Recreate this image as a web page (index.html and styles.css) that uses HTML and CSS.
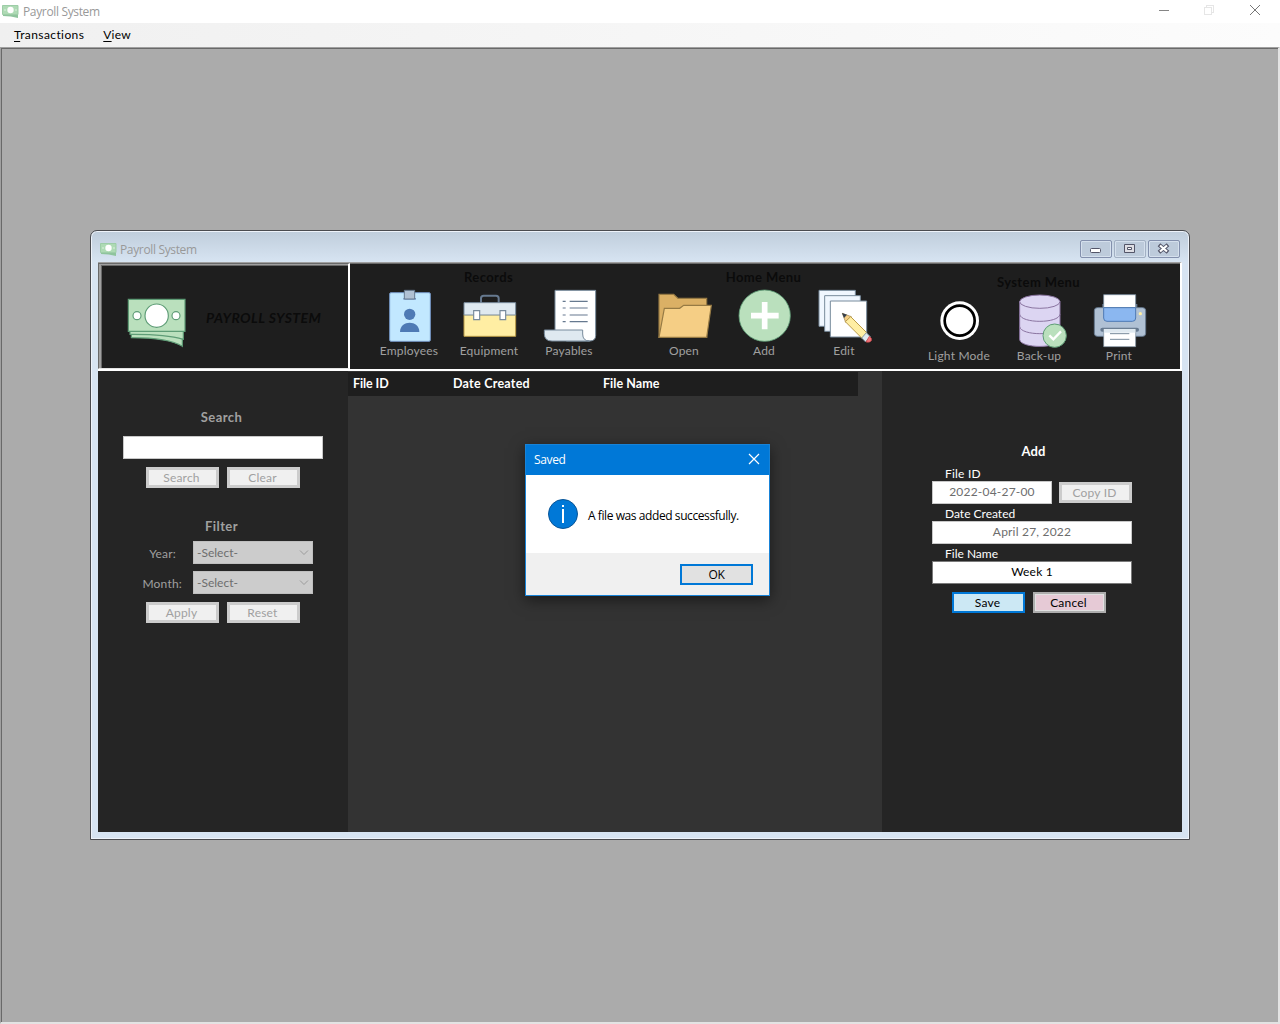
FILE: index.html
```html
<!DOCTYPE html>
<html lang="en">
<head>
<meta charset="utf-8">
<title>Payroll System</title>
<link rel="stylesheet" href="styles.css">
</head>
<body>
<svg class="defs" width="0" height="0" aria-hidden="true">
  <symbol id="money" viewBox="125 219 177 150">
    <g fill="#bae0bd" stroke="#5e9c76" stroke-width="3.5">
      <path d="M138 325V338Q250 338 291 364V325Z"/>
      <path d="M134 315V328Q240 327 294 343V315Z"/>
      <path d="M129 223H299V319H129Z"/>
      <circle cx="214" cy="272" r="35" fill="#fff"/>
      <circle cx="155" cy="272" r="12" fill="#fff"/>
      <circle cx="272" cy="272" r="12" fill="#fff"/>
    </g>
  </symbol>
  <symbol id="money-small" viewBox="0 0 17 14">
    <path d="M1 9H16V13Q9 11 1 11Z" fill="#8fc49c"/>
    <path d="M.5 .5H16V9.500H.5Z" fill="#aedab4" stroke="#9dcda7"/>
    <circle cx="8.500" cy="5" r="3.200" fill="#fff"/>
    <circle cx="3" cy="5" r="1" fill="#cde9d0"/><circle cx="14" cy="5" r="1" fill="#cde9d0"/>
  </symbol>
</svg>
<div class="app">
  <header class="titlebar">
    <svg class="mini" width="17" height="14"><use href="#money-small"/></svg>
    <span class="seg title-text">Payroll System</span>
    <svg class="app-controls" width="104" height="20" viewBox="0 0 104 20" fill="none" shape-rendering="crispEdges">
      <path d="M1 10.5H11" stroke="#858585"/>
      <path d="M46.5 7.5H53.5V14.5H46.5ZM48.500 7V5.500H55.500V12.500H54" stroke="#e6e6e6"/>
      <path d="M92 5L102 15M102 5L92 15" stroke="#777" shape-rendering="auto"/>
    </svg>
  </header>
  <nav class="menubar"><span class="m1"><u>T</u>ransactions</span><span class="m2"><u>V</u>iew</span></nav>
  <main class="workspace">
    <section class="window">
      <div class="caption">
        <svg class="mini" width="17" height="14"><use href="#money-small"/></svg>
        <span class="seg title-text">Payroll System</span>
        <div class="controls">
          <span class="control"><svg width="32" height="18"><rect x="10.500" y="8.500" width="10" height="4" rx="1" fill="#fff" stroke="#535568"/></svg></span>
          <span class="control soft"><svg width="32" height="18"><path d="M10.500 4.500H20.500V12.500H10.500Z" fill="#dedee4" stroke="#535568"/><path d="M13.500 7.500H17.500V9.500H13.500Z" fill="#fff" stroke="#535568"/></svg></span>
          <span class="control"><svg width="32" height="18"><path d="M12.500 6L18.500 11M18.500 6L12.500 11" stroke="#535568" stroke-width="4" stroke-linecap="square"/><path d="M12 5.500L19 11.500M19 5.500L12 11.500" stroke="#fff" stroke-width="2.200"/></svg></span>
        </div>
      </div>
      <div class="client">
        <div class="ribbon">
          <div class="brand">
            <svg width="59" height="50"><use href="#money"/></svg>
            <strong>PAYROLL SYSTEM</strong>
          </div>
          <div class="groups">
            <div class="group">
              <h2 class="t-records">Records</h2>
              <div class="tools">
                <div class="tool">
                  <svg viewBox="96 87 162 162"><rect x="119" y="98" width="122" height="146" rx="4" fill="#c2e8ff" stroke="#7496c4" stroke-width="3"/><path d="M160 119V114H198V119Z" fill="#7496c4"/><path d="M163 91H194V117H163Z" fill="#b0c1d4" stroke="#66798f" stroke-width="3"/><g fill="#4e7ab5"><circle cx="179" cy="163" r="17"/><path d="M150 216C150 179 208 179 208 216Z"/></g></svg>
                  <span class="l-emp">Employees</span>
                </div>
                <div class="tool">
                  <svg viewBox="336 87 162 162"><path d="M393 129V115Q393 107 401 107H438Q446 107 446 115V129" fill="none" stroke="#66798f" stroke-width="6"/><path d="M342 164H497V229H342Z" fill="#ffeea3" stroke="#ba9b48" stroke-width="3"/><path d="M342 128H497V165H342Z" fill="#dfe9f0" stroke="#788b9c" stroke-width="3"/><path d="M371 152H389V179H371ZM450 152H467V179H450Z" fill="#fff" stroke="#788b9c" stroke-width="3.500"/></svg>
                  <span class="l-eq">Equipment</span>
                </div>
                <div class="tool">
                  <svg viewBox="576 87 162 162"><path d="M615 91H737V226Q737 243 719 243H650L615 210Z" fill="#fff" stroke="#788b9c" stroke-width="3"/><path d="M583 210H698V222Q698 243 719 243H606Q583 243 583 221Z" fill="#dfe9f0" stroke="#788b9c" stroke-width="3"/><path d="M638 124H647M659 124H713M638 144H647M659 144H713M638 165H647M659 165H713M638 185H647M659 185H713" stroke="#66798f" stroke-width="3.500"/></svg>
                  <span class="l-pay">Payables</span>
                </div>
              </div>
            </div>
            <div class="group">
              <h2 class="t-home">Home Menu</h2>
              <div class="tools">
                <div class="tool">
                  <svg viewBox="51 87 162 162"><g stroke="#967a44" stroke-width="3.500"><path d="M57 232V103H101L114 115H200V232Z" fill="#dbb065"/><path d="M57 232L73 145H119L131 136H214L200 232Z" fill="#f5ce85"/></g></svg>
                  <span class="l-open">Open</span>
                </div>
                <div class="tool">
                  <svg viewBox="291 87 162 162"><circle cx="374" cy="167" r="77" fill="#bae0bd" stroke="#5e9c76" stroke-width="2.500"/><path d="M374 126V208M333 167H416" stroke="#fff" stroke-width="17"/></svg>
                  <span class="l-add">Add</span>
                </div>
                <div class="tool">
                  <svg viewBox="531 87 162 162"><g stroke="#788b9c" stroke-width="3"><path d="M537 91H646V199H537Z" fill="#f0f7ff"/><path d="M554 107H661V214H554Z" fill="#f0f7ff"/><path d="M571 123H680V231H571Z" fill="#fff"/></g><path d="M607 160L634 170L617 187Z" fill="#f5ce85" stroke="#967a44" stroke-width="2"/><path d="M606 159L621 164L612 174Z" fill="#36404d"/><path d="M632 170L681 219L666 235L616 185Z" fill="#ffeea3" stroke="#ba9b48" stroke-width="3"/><path d="M679 218L691 230L677 246L665 234Z" fill="#dfe9f0" stroke="#788b9c" stroke-width="2.500"/><path d="M688 229Q697 235 694 242Q689 249 678 246Z" fill="#f2747b" stroke="#c74343" stroke-width="2"/></svg>
                  <span class="l-edit">Edit</span>
                </div>
              </div>
            </div>
            <div class="group lower">
              <h2 class="t-system">System Menu</h2>
              <div class="tools">
                <div class="tool">
                  <svg viewBox="96 207 162 162"><circle cx="179" cy="287" r="58" fill="#fff"/><circle cx="179" cy="287" r="45" fill="#fff" stroke="#000" stroke-width="8"/></svg>
                  <span class="l-light">Light Mode</span>
                </div>
                <div class="tool">
                  <svg viewBox="336 207 162 162"><path d="M359 230V344C363 371 476 371 480 344V230Z" fill="#dcd5f2" stroke="#8b75a1" stroke-width="3"/><ellipse cx="419.500" cy="230" rx="60.500" ry="20" fill="#dcd5f2" stroke="#8b75a1" stroke-width="3"/><path d="M359 268C363 296 476 296 480 268M359 305C363 333 476 333 480 305" fill="none" stroke="#8b75a1" stroke-width="3"/><circle cx="464" cy="332" r="35" fill="#bae0bd" stroke="#5e9c76" stroke-width="3"/><path d="M448 331L460 343L483 319" fill="none" stroke="#fff" stroke-width="7"/></svg>
                  <span class="l-back">Back-up</span>
                </div>
                <div class="tool">
                  <svg viewBox="576 207 162 162"><path d="M607 237H712V260H607Z" fill="#66798f"/><rect x="583" y="248" width="154" height="86" rx="9" fill="#b0c1d4" stroke="#66798f" stroke-width="3"/><path d="M611 209H707V248H611Z" fill="#fff" stroke="#788b9c" stroke-width="2.500"/><path d="M611 248H707V279Q707 289 697 289H621Q611 289 611 279Z" fill="#8bb7f0" stroke="#4e7ab5" stroke-width="3"/><circle cx="721" cy="266" r="5" fill="#ffeea3"/><rect x="601" y="308" width="116" height="12" rx="6" fill="#66798f"/><path d="M611 312H707V365H611Z" fill="#fff" stroke="#788b9c" stroke-width="2"/><path d="M612 312H706V323H612Z" fill="#dfe9f0"/><path d="M630 326H688M630 343H688" stroke="#788b9c" stroke-width="3"/></svg>
                  <span class="l-print">Print</span>
                </div>
              </div>
            </div>
          </div>
        </div>
        <div class="panes">
          <aside class="left">
            <h3 class="h-search">Search</h3>
            <div class="field query"></div>
            <div class="pair"><button class="btn off b-search">Search</button><button class="btn off b-clear">Clear</button></div>
            <h3 class="h-filter">Filter</h3>
            <div class="row"><label class="l-year">Year:</label><div class="select"><span>-Select-</span><svg width="10" height="6"><path d="M1 .5L5 4.500L9 .5" fill="none" stroke="#9b9b9b"/></svg></div></div>
            <div class="row"><label class="l-month">Month:</label><div class="select"><span>-Select-</span><svg width="10" height="6"><path d="M1 .5L5 4.500L9 .5" fill="none" stroke="#9b9b9b"/></svg></div></div>
            <div class="pair last"><button class="btn off b-apply">Apply</button><button class="btn off b-reset">Reset</button></div>
          </aside>
          <div class="list"><div class="columns"><span class="c-id">File ID</span><span class="c-date">Date Created</span><span class="c-name">File Name</span></div></div>
          <aside class="right">
            <h3 class="h-add">Add</h3>
            <label class="f-id">File ID</label>
            <div class="idrow"><div class="field dim v-id">2022-04-27-00</div><button class="btn off b-copy">Copy ID</button></div>
            <label class="f-date">Date Created</label>
            <div class="field dim v-date">April 27, 2022</div>
            <label class="f-name">File Name</label>
            <div class="field active v-name">Week 1</div>
            <div class="pair"><button class="btn save">Save</button><button class="btn cancel">Cancel</button></div>
          </aside>
        </div>
      </div>
    </section>
  </main>
  <div class="dialog" role="dialog">
    <div class="dialog-title"><span class="seg d-title">Saved</span><svg width="12" height="12"><path d="M1 1L11 11M11 1L1 11" stroke="#fff" stroke-width="1.200"/></svg></div>
    <div class="dialog-body"><svg width="30" height="30"><circle cx="15" cy="15" r="14.500" fill="#0078d7" stroke="#0a5597"/><path d="M14 6h2v2h-2zM14 10h2v14h-2z" fill="#fff"/></svg><span class="seg d-msg">A file was added successfully.</span></div>
    <div class="dialog-foot"><button class="ok seg">OK</button></div>
  </div>
</div>
</body>
</html>
```
FILE: styles.css
```css
* { box-sizing: border-box; }
body { margin: 0; font: 12px/16px Lato, "Open Sans", sans-serif; color: #000; letter-spacing: .2px; }
button { font: inherit; letter-spacing: inherit; color: inherit; padding: 0; }
h2, h3 { margin: 0; font-size: 13px; line-height: 16px; font-weight: 700; text-align: center; letter-spacing: .4px; }
span, label, strong { white-space: nowrap; }
.defs { position: absolute; }
.seg { font-family: "Open Sans", sans-serif; letter-spacing: -.35px; }
.app { position: relative; width: 1280px; height: 1024px; overflow: hidden; background: #fff; display: flex; flex-direction: column; }
.titlebar { height: 23px; flex: none; display: flex; align-items: center; padding: 0 18px 0 2px; }
.title-text { color: #999; margin-left: 4px; }
.app-controls { margin: -3px 0 0 auto; }
.menubar { height: 24px; flex: none; padding: 0 14px; display: flex; align-items: center; gap: 19px; background: linear-gradient(90deg, #f0f0f0, #fcfcfc); letter-spacing: .4px; }
.menubar .m2 { letter-spacing: .2px; }
.menubar u { text-underline-offset: 2px; }
.workspace { flex: 1; position: relative; background: #ababab; border: 1px solid #e3e3e3; border-width: 1px 2px 2px 1px; border-top-color: #a0a0a0; border-left-color: #a0a0a0; box-shadow: inset 1px 1px #696969; }
.window { position: absolute; left: 89px; top: 182px; width: 1100px; height: 610px; border: 1px solid #4a4b4f; border-radius: 7px 7px 0 0; background: linear-gradient(#bfcddb, #d7e4f2 31px); box-shadow: inset 0 0 0 1px #eef3fa; padding: 0 7px 7px; display: flex; flex-direction: column; }
.caption { height: 31px; flex: none; display: flex; align-items: center; padding: 6px 2px 0; }
.caption .title-text { margin-left: 3px; }
.controls { margin: -2px 0 0 auto; display: flex; gap: 2px; }
.control { width: 32px; height: 18px; border: 1px solid #8390ad; border-radius: 2px; box-shadow: inset 0 0 0 1px #d5e0ed; background: #bdcbdb; }
.control svg { display: block; margin: -1px; }
.control.soft { border-color: #a2b0c3; }
.client { flex: 1; display: flex; flex-direction: column; background: #252525; }
.ribbon { height: 109px; flex: none; display: flex; background: #1e1e1e; border-top: 1px solid #a0a0a0; border-bottom: 2px solid #fff; border-right: 2px solid #fff; }
.brand { width: 252px; display: flex; align-items: center; border: solid #696969; border-width: 1px 2px 1px 1px; border-right-color: #fff; border-bottom-color: #e3e3e3; box-shadow: inset 2px 1px #a0a0a0, inset 3px 2px #696969; padding: 13px 0 0 28px; }
.brand strong { font-size: 14px; font-style: italic; color: #0b0b0b; margin: -9px 0 0 20px; letter-spacing: .45px; }
.groups { flex: 1; display: flex; gap: 35px; padding-left: 19px; border-top: 1px solid #696969; }
.group { width: 240px; padding-top: 5px; color: #a0a0a0; }
.group.lower { padding-top: 10px; }
.group h2 { color: #0b0b0b; margin-right: 1px; }
.tools { display: flex; margin-top: 4px; }
.tool { width: 80px; display: flex; flex-direction: column; align-items: center; }
.tool svg { width: 54px; height: 54px; overflow: visible; display: block; }
.panes { flex: 1; display: flex; }
.left { width: 250px; padding-top: 38px; color: #a0a0a0; }
.left h3 { margin-right: 3px; }
.field { height: 23px; background: #fff; border: 1px solid #c8c8c8; text-align: center; line-height: 20px; color: #000; }
.field.dim { color: #6d6d6d; }
.field.active { border-color: #7a7a7a; }
.query { width: 200px; margin: 11px 0 8px 25px; }
.pair { display: flex; gap: 8px; padding-left: 48px; }
.btn { width: 73px; height: 21px; border: 3px solid #ccc; background: #f0f0f0; line-height: 15px; padding-right: 2px; }
.btn.off { color: #a0a0a0; }
.h-filter { padding-top: 30px; margin-bottom: 7px; }
.row { display: flex; align-items: center; height: 23px; margin-bottom: 7px; }
.row label { width: 95px; padding: 3px 11px 0 0; text-align: right; }
.row .l-year { padding-right: 17px; }
.select { width: 120px; height: 23px; background: #ccc; border: 1px solid #bfbfbf; color: #6d6d6d; display: flex; justify-content: space-between; align-items: center; padding: 0 3px; letter-spacing: 0; }
.last { margin-top: 8px; }
.list { width: 534px; background: #333; padding-top: 1px; }
.columns { width: 510px; height: 24px; background: #1e1e1e; color: #fff; font-size: 12.500px; font-weight: 700; display: grid; grid-template-columns: 100px 150px 1fr; padding-left: 5px; line-height: 24px; letter-spacing: .15px; }
.c-id { letter-spacing: -.1px; }
.c-date { letter-spacing: .25px; }
.c-name { letter-spacing: .05px; }
.right { width: 300px; padding: 72px 50px 0; color: #fff; }
.right h3 { margin: 0 0 7px 3px; letter-spacing: .2px; }
.right label { display: block; height: 15px; margin-top: 2px; padding-left: 13px; }
.right .f-id { margin-top: 0; }
.right .f-date, .right .f-name { letter-spacing: 0; }
.idrow { display: flex; gap: 7px; align-items: center; }
.idrow .field { width: 120px; }
.right .pair { margin-top: 8px; padding-left: 20px; }
.save { background: #cce8f4; border: 2px solid #0078d7; color: #000; }
.cancel { background: #e6cad6; border: 2px solid #adadad; box-shadow: inset 0 0 0 1px #e1e1e1; color: #000; }
.dialog { position: absolute; left: 525px; top: 444px; width: 245px; height: 152px; border: 1px solid #1883d7; background: #fff; box-shadow: 0 4px 14px rgba(0,0,0,.5); display: flex; flex-direction: column; }
.dialog-title { height: 30px; background: #0078d7; color: #fff; display: flex; justify-content: space-between; align-items: center; padding: 0 9px 0 8px; }
.dialog-title svg { margin-top: -2px; }
.dialog-body { height: 78px; display: flex; align-items: center; padding-left: 22px; gap: 10px; }
.d-msg { padding-top: 3px; letter-spacing: -.42px; }
.dialog-foot { flex: 1; background: #f0f0f0; display: flex; justify-content: flex-end; padding: 11px 16px 0 0; }
.ok { width: 73px; height: 21px; border: 2px solid #0078d7; background: #e1e1e1; line-height: 17px; }
```
